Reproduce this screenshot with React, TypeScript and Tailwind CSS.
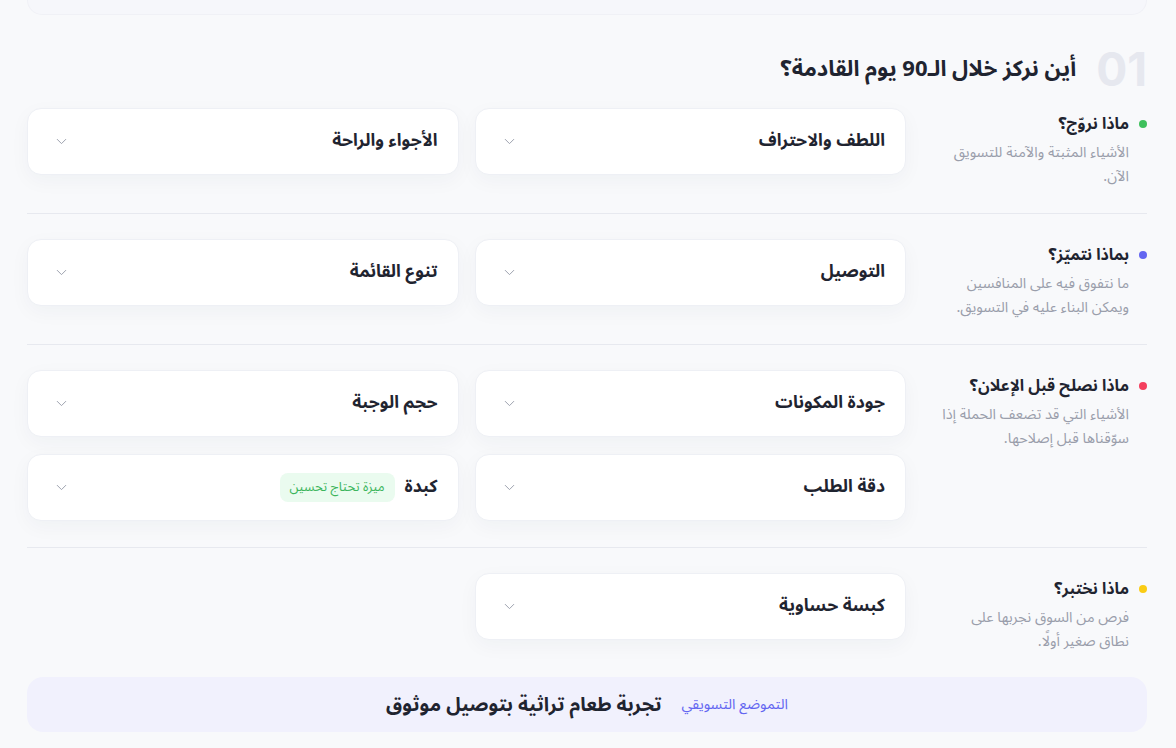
import { ChevronDown } from 'lucide-react';

// -----------------------------------------------------------------------------
// Data
// -----------------------------------------------------------------------------

type Item = { title: string; badge?: string };

type Group = {
  title: string;
  dot: string;
  lines: string[];
  items: Item[];
};

const groups: Group[] = [
  {
    title: 'ماذا نروّج؟',
    dot: 'bg-[#3ec05c]',
    lines: ['الأشياء المثبتة والآمنة للتسويق', 'الآن.'],
    items: [{ title: 'اللطف والاحتراف' }, { title: 'الأجواء والراحة' }],
  },
  {
    title: 'بماذا نتميّز؟',
    dot: 'bg-[#6366f1]',
    lines: ['ما نتفوق فيه على المنافسين', 'ويمكن البناء عليه في التسويق.'],
    items: [{ title: 'التوصيل' }, { title: 'تنوع القائمة' }],
  },
  {
    title: 'ماذا نصلح قبل الإعلان؟',
    dot: 'bg-[#f43f5e]',
    lines: ['الأشياء التي قد تضعف الحملة إذا', 'سوّقناها قبل إصلاحها.'],
    items: [
      { title: 'جودة المكونات' },
      { title: 'حجم الوجبة' },
      { title: 'دقة الطلب' },
      { title: 'كبدة', badge: 'ميزة تحتاج تحسين' },
    ],
  },
  {
    title: 'ماذا نختبر؟',
    dot: 'bg-[#facc15]',
    lines: ['فرص من السوق نجربها على', 'نطاق صغير أولًا.'],
    items: [{ title: 'كبسة حساوية' }],
  },
];

// -----------------------------------------------------------------------------
// Components
// -----------------------------------------------------------------------------

const ItemCard = ({ item }: { item: Item }) => (
  <div className="flex h-[67px] items-center justify-between rounded-[14px] border border-[#eef0f5] bg-white pl-[25px] pr-[20px] shadow-[0_6px_20px_rgba(30,41,80,0.04)]">
    <div className="flex items-center gap-[10px]">
      <span className="text-[17.5px] font-bold text-[#1f2430]">{item.title}</span>
      {item.badge && (
        <span className="rounded-lg bg-[#eafbef] px-[10px] py-[5px] text-[13px] leading-[19px] text-[#3bb55c]">
          {item.badge}
        </span>
      )}
    </div>
    <ChevronDown className="size-[17px] text-[#9ca1ad]" strokeWidth={1.4} />
  </div>
);

const GroupRow = ({ group, last }: { group: Group; last: boolean }) => (
  <div
    className={`grid grid-cols-[225px_1fr_1fr] gap-x-4 gap-y-[17px] pt-[25px] ${
      last ? 'pb-[25px]' : 'border-b border-[#e7e9ef] pb-[26px]'
    }`}
  >
    <div className={`mb-[-2px] pt-[2px] ${group.items.length > 2 ? 'row-span-2' : ''}`}>
      <div className="flex items-center gap-[10px]">
        <span className={`size-2 rounded-full ${group.dot}`} />
        <span className="text-[16px] font-bold leading-7 text-[#1f2430]">{group.title}</span>
      </div>
      <div className="mt-[3px] pr-[18px] text-[14.5px] leading-6 text-[#9a9eab]">
        {group.lines.map((l) => (
          <div key={l}>{l}</div>
        ))}
      </div>
    </div>
    {group.items.map((it) => (
      <ItemCard key={it.title} item={it} />
    ))}
  </div>
);

export default function App() {
  return (
    <div
      dir="rtl"
      className="min-h-[748px] bg-[#f8f9fb] pl-[27px] pr-[29px]"
      style={{ fontFamily: '"Noto Sans Arabic", "Noto Sans", "DejaVu Sans", sans-serif' }}
    >
      <div className="h-[15px] rounded-b-2xl border-x border-b border-[#f0f1f6] bg-[#f6f7fb]" />

      <div className="mt-[28px] flex items-center gap-5">
        <span className="font-['Inter'] text-[46px] font-bold leading-[52px] text-[#e6e8ef]">01</span>
        <h2 className="text-[22px] font-bold text-[#1f2430]">أين نركز خلال الـ90 يوم القادمة؟</h2>
      </div>

      <div className="mt-[-12px]">
        {groups.map((g, i) => (
          <GroupRow key={g.title} group={g} last={i === groups.length - 1} />
        ))}
      </div>

      <div className="flex h-[55px] items-center justify-center gap-5 rounded-2xl bg-[#f1f1fd]">
        <span className="text-[14.5px] text-[#6366f1]">التموضع التسويقي</span>
        <span className="text-[19.5px] font-bold text-[#1f2430]">تجربة طعام تراثية بتوصيل موثوق</span>
      </div>
    </div>
  );
}
